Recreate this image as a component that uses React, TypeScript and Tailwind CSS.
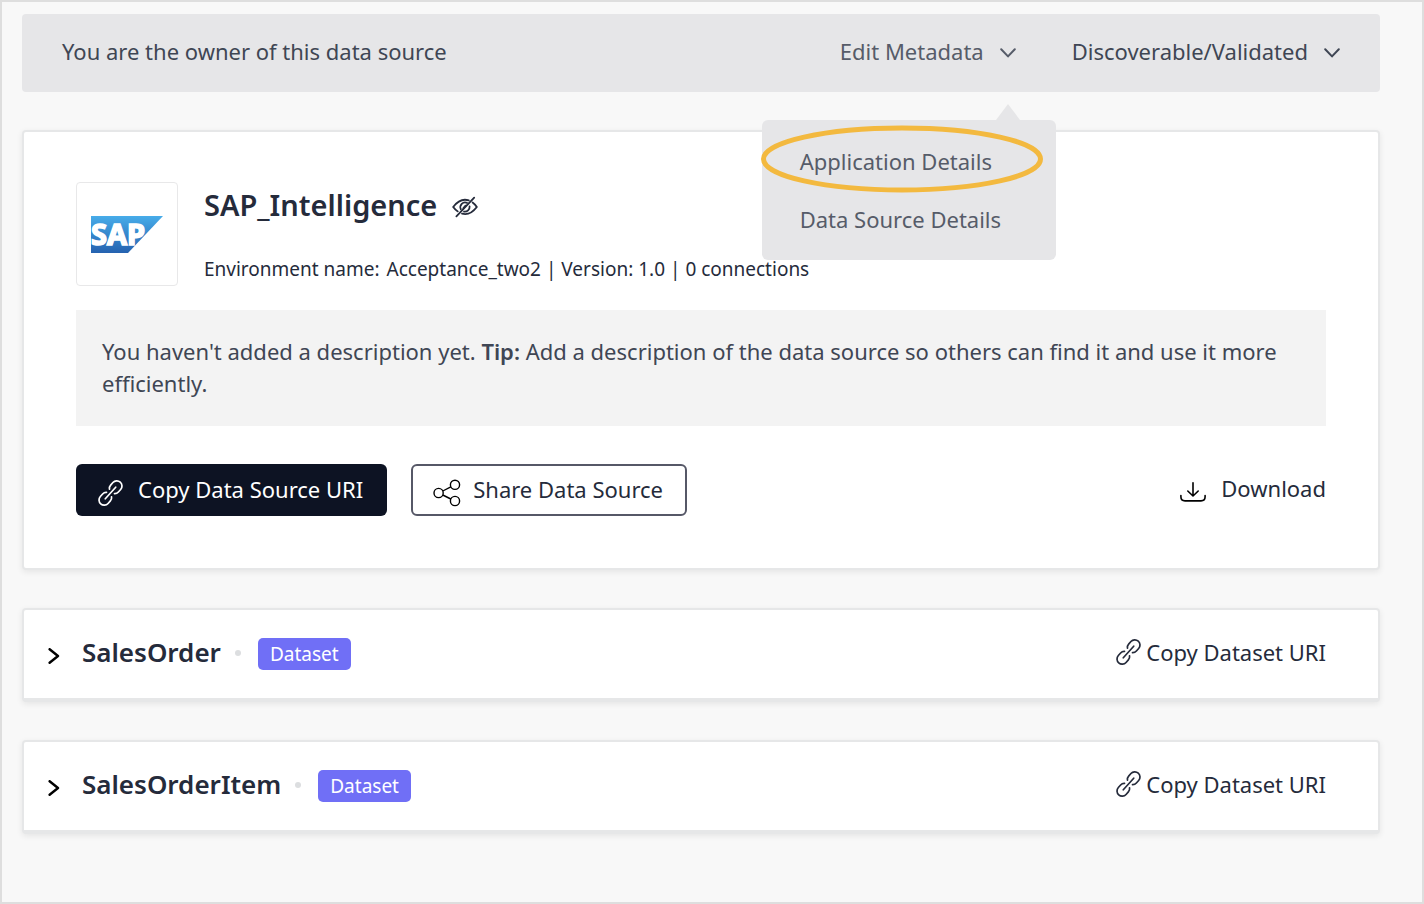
import { useState } from "react";

function LinkIcon({ className = "" }: { className?: string }) {
  return (
    <svg
      viewBox="0 0 26 28"
      className={`h-7 w-[26px] shrink-0 ${className}`}
      fill="none"
      stroke="currentColor"
      strokeWidth="1.7"
      strokeLinecap="round"
      aria-hidden="true"
    >
      <g transform="translate(12.5 14) rotate(-48)">
        <path d="M2.2 -3.4Q3.6 -5.2 6 -5.2H9.4A5.2 5.2 0 0 1 9.4 5.2H6Q3.6 5.2 2.2 3.4" />
        <path d="M-2.2 -3.4Q-3.6 -5.2 -6 -5.2H-9.4A5.2 5.2 0 0 0 -9.4 5.2H-6Q-3.6 5.2 -2.2 3.4" />
        <path d="M-7.8 0H7.8" />
      </g>
    </svg>
  );
}

function ShareIcon() {
  return (
    <svg viewBox="0 0 28 28" className="mt-2 size-7 shrink-0 text-black" fill="none" stroke="currentColor" strokeWidth="1.4" aria-hidden="true">
      <circle cx="5.6" cy="14" r="4.6" />
      <circle cx="22" cy="5.8" r="4.6" />
      <circle cx="22" cy="22" r="4.6" />
      <path d="M9.8 12 17.8 7.8M9.8 16 17.8 20" />
    </svg>
  );
}

function DownloadIcon() {
  return (
    <svg viewBox="0 0 28 24" className="mt-2 h-6 w-7 shrink-0 text-black" fill="none" stroke="currentColor" strokeWidth="1.6" strokeLinecap="round" strokeLinejoin="round" aria-hidden="true">
      <path d="M1.9 15.6V16.8Q1.9 20.9 6 20.9H22Q26.1 20.9 26.1 16.8V15.6" />
      <path d="M14 2.8V15.8M8.8 11 14 16 19.2 11" />
    </svg>
  );
}

function HiddenIcon() {
  return (
    <svg viewBox="0 0 28 24" className="mt-1 h-6 w-7 shrink-0" fill="none" stroke="currentColor" strokeWidth="1.8" strokeLinecap="round" role="img" aria-label="Hidden">
      <path d="M17.8 5.4Q9.2 2.6 2.2 12 4.2 14.8 6.8 16.4" />
      <path d="M21.6 7.4Q24.2 9.2 25.8 12 19.2 20.8 11 18.6" />
      <path d="M16 7.8A4.8 4.8 0 0 0 9.8 14.2" />
      <path d="M18.6 11.4A4.8 4.8 0 0 1 13 16.6" />
      <path d="M14.6 10.6 12.4 13.2" />
      <path d="M23.2 2.6 5.4 21.4" />
    </svg>
  );
}

function ChevronDown() {
  return (
    <svg viewBox="0 0 16 10" className="mt-1 h-[10px] w-4 shrink-0" fill="none" stroke="currentColor" strokeWidth="2" strokeLinecap="round" strokeLinejoin="round" aria-hidden="true">
      <path d="M1.2 1.2 8 8.4 14.8 1.2" />
    </svg>
  );
}

function SapLogo() {
  return (
    <svg viewBox="0 0 72 37" className="h-[37px] w-[72px] overflow-visible" role="img" aria-label="SAP">
      <defs>
        <linearGradient id="sap-blue" x1="0" y1="0" x2="0" y2="1">
          <stop offset="0" stopColor="#47ace9" />
          <stop offset="1" stopColor="#2562b0" />
        </linearGradient>
      </defs>
      <path d="M0 0H72L37 37H0Z" fill="url(#sap-blue)" />
      <text x="0" y="29" fill="#fff" stroke="#fff" strokeWidth="1.6" fontFamily="Noto Sans, sans-serif" fontWeight="700" fontSize="29">
        SAP
      </text>
    </svg>
  );
}

function DatasetRow({ name }: { name: string }) {
  const [open, setOpen] = useState(false);
  return (
    <section className="flex items-start justify-between rounded border-2 border-b-4 border-[#e6e7e8] bg-white pt-[26px] pr-[52px] pb-7 pl-6 shadow-[0_2px_6px_rgba(0,0,0,0.08)]">
      <div className="flex items-start">
        <button
          type="button"
          aria-expanded={open}
          onClick={() => setOpen(!open)}
          className="flex items-center gap-[22px] text-[26px] leading-8 font-semibold"
        >
          <svg viewBox="0 0 12 16" className="mt-2 h-4 w-3 text-black" fill="none" stroke="currentColor" strokeWidth="2.4" strokeLinecap="round" strokeLinejoin="round" aria-hidden="true">
            <path d="M1.6 1.2 10 8 1.6 14.8" />
          </svg>
          {name}
        </button>
        <span className="mt-[14px] ml-[14px] size-[6px] rounded-full bg-[#dcdee0]" />
        <span className="mt-[2px] ml-[17px] rounded-[5px] bg-[#706ff6] px-3 text-[19px] leading-8 text-white">Dataset</span>
      </div>
      <button type="button" className="flex items-center gap-1 text-[22px] leading-8">
        <LinkIcon />
        Copy Dataset URI
      </button>
    </section>
  );
}

export default function App() {
  return (
    <div className="min-h-screen border-2 border-[#dedede] bg-[#f8f8f8] pt-3 pr-[42px] pb-12 pl-5 font-['Noto_Sans',sans-serif] text-[#252b3b]">
      <main className="flex flex-col gap-[38px]">
        <header className="flex items-center justify-between rounded bg-[#e6e6e8] px-10 pt-[21px] pb-[25px] text-[22px] leading-8 text-[#3f4654]">
          <p>You are the owner of this data source</p>
          <div className="flex items-center gap-14">
            <div className="relative">
              <button type="button" aria-haspopup="menu" aria-expanded="true" className="flex items-center gap-4 text-[#565c69]">
                Edit Metadata
                <ChevronDown />
              </button>
              <div role="menu" className="absolute top-full -right-10 mt-[53px] w-[294px] rounded-md bg-[#e6e6e8] py-[25px] pl-[38px] text-[#565c69]">
                <svg viewBox="0 0 24 16" className="absolute -top-4 right-9 h-4 w-6" aria-hidden="true">
                  <path d="M12 0 24 16H0Z" fill="#e6e6e8" />
                </svg>
                <svg viewBox="0 0 282 68" className="pointer-events-none absolute top-[5px] -left-px h-[68px] w-[282px]" aria-hidden="true">
                  <ellipse cx="141" cy="34" rx="138.5" ry="31" fill="none" stroke="#f3b93f" strokeWidth="5" />
                </svg>
                <button type="button" role="menuitem" className="block">Application Details</button>
                <button type="button" role="menuitem" className="mt-[26px] block">Data Source Details</button>
              </div>
            </div>
            <button type="button" aria-haspopup="menu" className="flex items-center gap-4">
              Discoverable/Validated
              <ChevronDown />
            </button>
          </div>
        </header>

        <section className="rounded border-2 border-[#e6e7e8] bg-white px-[52px] pt-[50px] pb-[52px] shadow-[0_2px_6px_rgba(0,0,0,0.08)]">
          <div className="flex gap-[26px]">
            <div className="flex h-[104px] w-[102px] items-center justify-center rounded border border-[#e8e8e9]">
              <SapLogo />
            </div>
            <div className="flex flex-col justify-between pt-[3px] pb-px">
              <div className="flex items-center gap-[14px]">
                <h1 className="text-[29px] leading-10 font-semibold">SAP_Intelligence</h1>
                <HiddenIcon />
              </div>
              <p className="text-[19px] leading-8">
                Environment name: <span className="ml-[2px]">Acceptance_two2</span> | Version: 1.0 | 0 connections
              </p>
            </div>
          </div>
          <p className="mt-6 bg-[#f3f3f3] px-[26px] pt-[25px] pb-[27px] text-[22px] leading-8 text-[#3f4654]">
            You haven't added a description yet. <strong className="font-semibold">Tip:</strong> Add a description of the data source so others can find it and use it more efficiently.
          </p>
          <div className="mt-[38px] flex items-center justify-between text-[22px] leading-8">
            <div className="flex gap-6">
              <button type="button" className="flex h-[52px] items-center gap-[14px] rounded-md bg-[#0d1323] pr-6 pb-[2px] pl-[22px] text-white">
                <LinkIcon className="mt-2" />
                Copy Data Source URI
              </button>
              <button type="button" className="flex h-[52px] items-center gap-3 rounded-md border-2 border-[#565867] pr-[22px] pb-[2px] pl-5">
                <ShareIcon />
                Share Data Source
              </button>
            </div>
            <button type="button" className="flex items-center gap-[14px] pb-1">
              <DownloadIcon />
              Download
            </button>
          </div>
        </section>

        <DatasetRow name="SalesOrder" />
        <DatasetRow name="SalesOrderItem" />
      </main>
    </div>
  );
}
